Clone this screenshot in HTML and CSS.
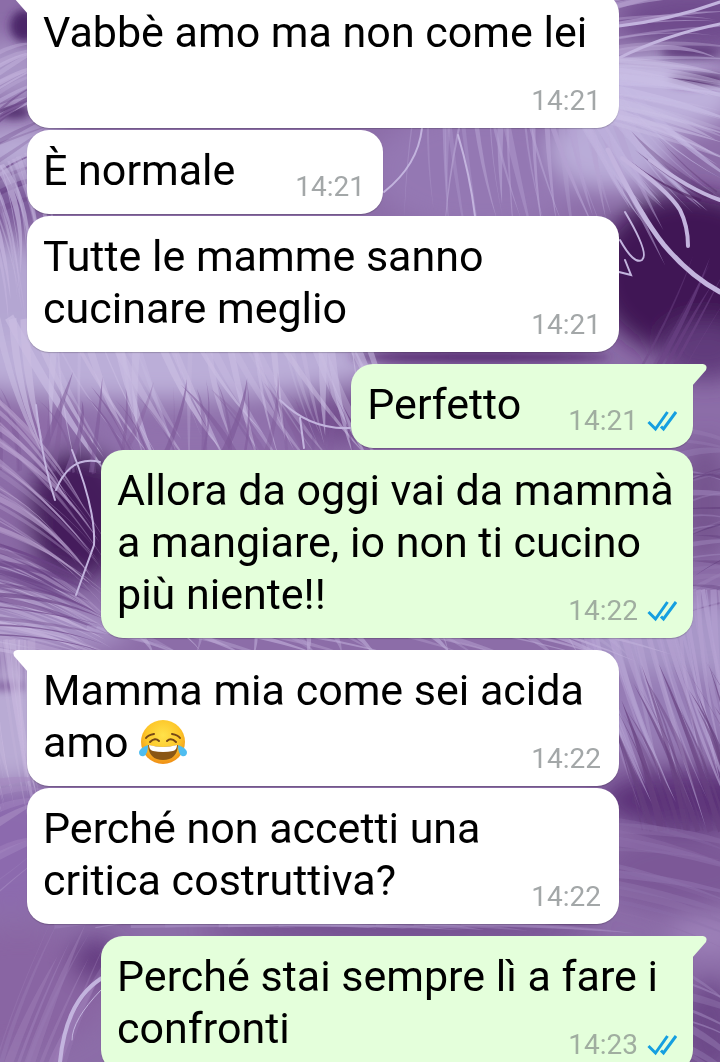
FILE: index.html
```html
<!DOCTYPE html>
<html lang="it">
<head>
    <meta charset="UTF-8">
    <meta name="viewport" content="width=device-width, initial-scale=1.0">
    <title>Chat</title>
    <link rel="stylesheet" href="styles.css">
</head>
<body>

    <svg class="wallpaper" viewBox="0 0 720 1062" preserveAspectRatio="xMidYMid slice" aria-hidden="true">
        <defs>
            <filter id="soft" x="-50%" y="-50%" width="200%" height="200%">
                <feGaussianBlur stdDeviation="12"/>
            </filter>
            <filter id="softer" x="-50%" y="-50%" width="200%" height="200%">
                <feGaussianBlur stdDeviation="4"/>
            </filter>
            <filter id="fuzz">
                <feGaussianBlur stdDeviation="0.7"/>
            </filter>
        </defs>
        <rect width="720" height="1062" fill="#8c6da8"/>
        <g filter="url(#soft)">
            <ellipse cx="10" cy="70" rx="50" ry="30" fill="#a995c6"/>
            <ellipse cx="20" cy="150" rx="50" ry="25" fill="#b9abd6"/>
            <ellipse cx="10" cy="200" rx="40" ry="26" fill="#7d5b9b"/>
            <ellipse cx="10" cy="300" rx="50" ry="60" fill="#b4a6d2"/>
            <ellipse cx="150" cy="362" rx="230" ry="38" fill="#bbaed8"/>
            <ellipse cx="20" cy="425" rx="50" ry="25" fill="#8e6ca8"/>
            <ellipse cx="200" cy="438" rx="140" ry="24" fill="#9172ad"/>
            <ellipse cx="335" cy="420" rx="45" ry="26" fill="#74508f"/>
            <ellipse cx="80" cy="515" rx="52" ry="66" fill="#451c5b"/>
            <ellipse cx="5" cy="525" rx="25" ry="35" fill="#8a69a5"/>
            <ellipse cx="40" cy="580" rx="40" ry="14" fill="#6b4487"/>
            <ellipse cx="20" cy="630" rx="110" ry="24" fill="#a893c5"/>
            <ellipse cx="10" cy="725" rx="45" ry="60" fill="#b9abd4"/>
            <ellipse cx="10" cy="850" rx="60" ry="60" fill="#8c6bae"/>
            <ellipse cx="20" cy="990" rx="90" ry="60" fill="#8965a3"/>
            <ellipse cx="96" cy="960" rx="25" ry="22" fill="#643b80"/>
            <ellipse cx="480" cy="170" rx="110" ry="60" fill="#9478b3"/>
            <ellipse cx="690" cy="20" rx="70" ry="32" fill="#704b8d"/>
            <ellipse cx="690" cy="275" rx="95" ry="82" fill="#3f1654"/>
            <ellipse cx="650" cy="95" rx="90" ry="40" fill="#beb1dc"/>
            <ellipse cx="610" cy="150" rx="60" ry="40" fill="#b9acd8"/>
            <ellipse cx="705" cy="350" rx="45" ry="30" fill="#613b7c"/>
            <ellipse cx="705" cy="500" rx="25" ry="60" fill="#76548f"/>
            <ellipse cx="690" cy="640" rx="110" ry="40" fill="#a897c8"/>
            <ellipse cx="670" cy="710" rx="80" ry="40" fill="#967db6"/>
            <ellipse cx="690" cy="800" rx="90" ry="30" fill="#5b3278"/>
            <ellipse cx="680" cy="870" rx="80" ry="40" fill="#7b5897"/>
            <ellipse cx="710" cy="935" rx="40" ry="20" fill="#9c80b8"/>
            <ellipse cx="710" cy="1030" rx="30" ry="50" fill="#6d4889"/>
            <ellipse cx="400" cy="929" rx="200" ry="12" fill="#6d4689"/>
        </g>
        <g filter="url(#softer)">
            <ellipse cx="24" cy="26" rx="14" ry="16" fill="#4c2869"/>
            <ellipse cx="14" cy="112" rx="16" ry="7" fill="#553171"/>
            <ellipse cx="698" cy="80" rx="30" ry="6" fill="#4e2766"/>
            <ellipse cx="690" cy="52" rx="30" ry="6" fill="#5d3979"/>
            <ellipse cx="8" cy="686" rx="18" ry="4" fill="#7a5797"/>
            <ellipse cx="480" cy="357" rx="130" ry="5" fill="#542c70"/>
        </g>
        <g id="strands" filter="url(#fuzz)"></g>
        <g fill="none" stroke="#c3b4de" stroke-linecap="round" filter="url(#fuzz)">
            <path d="M608 150Q640 215 664 245Q690 276 720 292" stroke-width="5"/>
            <path d="M622 158Q668 190 680 210Q688 226 688 246" stroke-width="4"/>
            <path d="M650 160Q690 190 720 200" stroke-width="4"/>
            <path d="M620 240Q634 265 642 260Q650 254 625 212" stroke-width="2"/>
            <path d="M619 272L631 275L625 260" stroke-width="2"/>
            <path d="M619 26Q670 20 720 2M619 58Q665 35 720 24" stroke-width="3"/>
            <path d="M422 128Q418 165 384 192M458 135Q470 175 475 216" stroke-width="2"/>
            <path d="M102 978Q66 1000 60 1062" stroke-width="4"/>
            <path d="M101 990Q72 1020 72 1040" stroke-width="1"/>
            <path d="M36 405Q42 460 55 500M72 450Q96 510 94 545L76 595M100 462Q70 455 56 490" stroke-width="2"/>
            <path d="M280 400Q310 430 350 428M300 418L304 448" stroke-width="2"/>
        </g>
    </svg>

    <main class="chat">
        <section class="group received">
            <div class="message tail">Vabbè amo ma non come lei<span class="meta"><time>14:21</time></span></div>
            <div class="message">È normale<span class="meta"><time>14:21</time></span></div>
            <div class="message">Tutte le mamme sanno cucinare meglio<span class="meta"><time>14:21</time></span></div>
        </section>

        <section class="group sent">
            <div class="message tail">Perfetto<span class="meta"><time>14:21</time><svg class="ticks" viewBox="0 0 30 22" role="img" aria-label="Letto"><path d="M1.500 12L8.500 19L20.500 2M14 16.500L16.500 19L29 2"/></svg></span></div>
            <div class="message">Allora da oggi vai da mammà a mangiare, io non ti cucino più niente!!<span class="meta"><time>14:22</time><svg class="ticks" viewBox="0 0 30 22" role="img" aria-label="Letto"><path d="M1.500 12L8.500 19L20.500 2M14 16.500L16.500 19L29 2"/></svg></span></div>
        </section>

        <section class="group received">
            <div class="message tail">Mamma mia come sei acida amo <svg class="emoji" viewBox="0 0 48 46" role="img" aria-label="Faccina che ride con le lacrime">
                <defs>
                    <radialGradient id="face" cx="50%" cy="35%" r="65%">
                        <stop offset="0" stop-color="#ffe24a"/>
                        <stop offset="0.6" stop-color="#fdc629"/>
                        <stop offset="1" stop-color="#ef8e16"/>
                    </radialGradient>
                </defs>
                <circle cx="24" cy="23" r="22" fill="url(#face)"/>
                <path d="M9 26Q24 30 39 26Q38 41 24 41Q10 41 9 26Z" fill="#8a5614"/>
                <path d="M10 26Q24 30 38 26Q38 31 34 32Q24 34 14 32Q10 31 10 26Z" fill="#fff"/>
                <path d="M7 19Q9 16 15 15M41 19Q39 16 33 15M11 23Q16 18 20 22M28 22Q32 18 37 23" fill="none" stroke="#754716" stroke-width="2" stroke-linecap="round"/>
                <path d="M9 26Q0 29 0 34Q1 38 5 37Q9 35 9 26ZM39 26Q48 29 48 34Q47 38 43 37Q39 35 39 26Z" fill="#4fbdf0"/>
            </svg><span class="meta"><time>14:22</time></span></div>
            <div class="message">Perché non accetti una critica costruttiva?<span class="meta"><time>14:22</time></span></div>
        </section>

        <section class="group sent">
            <div class="message tail">Perché stai sempre lì a fare i confronti<span class="meta"><time>14:23</time><svg class="ticks" viewBox="0 0 30 22" role="img" aria-label="Letto"><path d="M1.500 12L8.500 19L20.500 2M14 16.500L16.500 19L29 2"/></svg></span></div>
        </section>
    </main>

    <script src="wallpaper.js"></script>
</body>
</html>
```
FILE: styles.css
```css
* {
    box-sizing: border-box;
}

body {
    margin: 0;
    height: 100vh;
    overflow: hidden;
    background: #8c6da8;
    color: #000;
    font-family: Roboto, sans-serif;
    font-size: 43px;
    line-height: 52px;
}

.wallpaper {
    position: fixed;
    inset: 0;
    width: 100%;
    height: 100%;
}

/* the list is scrolled a little past the first message */
.chat {
    position: relative;
    display: flex;
    flex-direction: column;
    gap: 12px;
    margin-top: -8px;
    padding: 0 27px;
}

.group {
    display: flex;
    flex-direction: column;
    align-items: flex-start;
    gap: 2px;
}
.group.sent {
    align-items: flex-end;
}

.message {
    position: relative;
    display: flow-root;
    max-width: 592px;
    padding: 14px 18px 16px 16px;
    border-radius: 22px;
    background: #fff;
    box-shadow: 0 1px 1px rgba(0, 0, 0, 0.2);
}
.sent .message {
    padding-right: 16px;
    background: #e4ffdb;
}
.received .tail {
    border-top-left-radius: 0;
}
.sent .tail {
    border-top-right-radius: 0;
}

.tail::before {
    content: "";
    position: absolute;
    top: 0;
    width: 15px;
    height: 22px;
    background: inherit;
}
.received .tail::before {
    right: calc(100% - 1px);
    clip-path: path("M15 0H4Q-1 1 1 6L15 22Z");
}
.sent .tail::before {
    left: calc(100% - 1px);
    clip-path: path("M0 0H11Q16 1 14 6L0 22Z");
}

.meta {
    float: right;
    display: flex;
    align-items: center;
    gap: 9px;
    margin: 32px 0 0 60px;
    color: #a3a7a8;
    font-size: 28px;
    line-height: 22px;
}
.sent .meta {
    margin-left: 47px;
    color: #a0aea0;
}

.ticks {
    width: 30px;
    height: 22px;
    fill: none;
    stroke: #159fe0;
    stroke-width: 3;
}

.emoji {
    width: 48px;
    height: 46px;
    vertical-align: -8px;
}
```
FILE: wallpaper.js
```js
const strands = document.getElementById('strands');

// small repeatable generator, so the feathers always look the same
let seed = 7;
function rand() {
    seed = (seed * 16807) % 2147483647;
    return seed / 2147483647;
}

// each fan: root segment, tip segment, bend, count, max width, colour
const fans = [
    [[-10, 60], [-10, 130], [50, 30], [60, 100], 10, 12, 6, '#c3b2dc'],
    [[-10, 120], [-10, 220], [60, 70], [60, 190], 8, 10, 6, '#6d478b'],
    [[-30, 180], [30, 150], [10, 330], [60, 300], 14, 16, 6, '#c4b5de'],
    [[-10, 320], [360, 315], [50, 480], [430, 480], -10, 46, 9, '#cabde2'],
    [[0, 470], [360, 480], [-10, 370], [330, 370], 12, 34, 6, '#7e5a99'],
    [[-20, 380], [-20, 560], [110, 540], [120, 630], 12, 26, 5, '#b9a2cf'],
    [[-20, 560], [-20, 650], [110, 620], [130, 680], 8, 22, 6, '#c5b4dc'],
    [[-10, 540], [-10, 640], [120, 590], [120, 660], 8, 12, 5, '#6a4286'],
    [[-40, 640], [30, 640], [0, 860], [50, 820], -8, 16, 7, '#c9b9df'],
    [[-20, 780], [-20, 920], [50, 770], [50, 850], 10, 8, 8, '#a68bc2'],
    [[-10, 1080], [60, 1100], [60, 900], [120, 930], -14, 10, 14, '#9c7db6'],
    [[420, 60], [600, 60], [400, 260], [680, 270], -10, 26, 8, '#b5a2d2'],
    [[560, 90], [620, 80], [630, 230], [760, 200], -14, 20, 11, '#c0b3de'],
    [[590, 60], [590, 120], [760, 60], [770, 180], 6, 20, 11, '#cabfe5'],
    [[600, 0], [600, 60], [760, -20], [760, 60], 14, 10, 6, '#b8a4d2'],
    [[720, 190], [700, 200], [640, 120], [610, 150], -6, 5, 7, '#4a205e'],
    [[680, 380], [640, 370], [740, 290], [700, 240], 10, 6, 5, '#6d4486'],
    [[680, 430], [680, 620], [760, 440], [760, 600], 8, 18, 6, '#9a80b6'],
    [[740, 450], [740, 610], [670, 440], [680, 620], 8, 10, 5, '#5f3b7b'],
    [[560, 590], [740, 590], [640, 820], [790, 840], -10, 34, 7, '#b5a2d2'],
    [[640, 830], [790, 830], [590, 670], [710, 650], 10, 24, 6, '#67417f'],
    [[600, 820], [600, 910], [780, 840], [780, 970], 8, 12, 10, '#8d6faa'],
    [[680, 960], [680, 1062], [760, 1000], [760, 1110], 6, 8, 7, '#9a80b6'],
    [[80, 630], [600, 625], [160, 662], [720, 665], 4, 34, 6, '#c0afda'],
    [[20, 929], [500, 925], [140, 922], [720, 936], 4, 12, 6, '#a88fc4']
];

function mix(a, b, t) {
    return [a[0] + (b[0] - a[0]) * t, a[1] + (b[1] - a[1]) * t];
}

// a strand is wide at its root and runs out to a point
fans.forEach(([root1, root2, tip1, tip2, bend, count, width, color]) => {
    for (let i = 0; i < count; i++) {
        const t = (i + rand()) / count;
        const root = mix(root1, root2, t);
        const end = mix(tip1, tip2, Math.min(1, Math.max(0, t + (rand() - 0.5) * 0.35)));
        const tip = mix(root, end, 0.7 + rand() * 0.3);
        const mid = mix(root, tip, 0.5);
        mid[0] += bend * (rand() + 0.3);
        mid[1] -= bend * (rand() + 0.3);

        const length = Math.hypot(tip[0] - root[0], tip[1] - root[1]);
        const w = 1 + rand() * width;
        const side = [(tip[1] - root[1]) / length * w, (root[0] - tip[0]) / length * w];
        const back = [mid[0] + side[0], mid[1] + side[1]];
        const base = [root[0] + side[0], root[1] + side[1]];

        const path = document.createElementNS('http://www.w3.org/2000/svg', 'path');
        path.setAttribute('d', `M${root}Q${mid} ${tip}Q${back} ${base}Z`);
        path.setAttribute('fill', color);
        path.setAttribute('fill-opacity', 0.25 + rand() * 0.45);
        strands.appendChild(path);
    }
});
```
